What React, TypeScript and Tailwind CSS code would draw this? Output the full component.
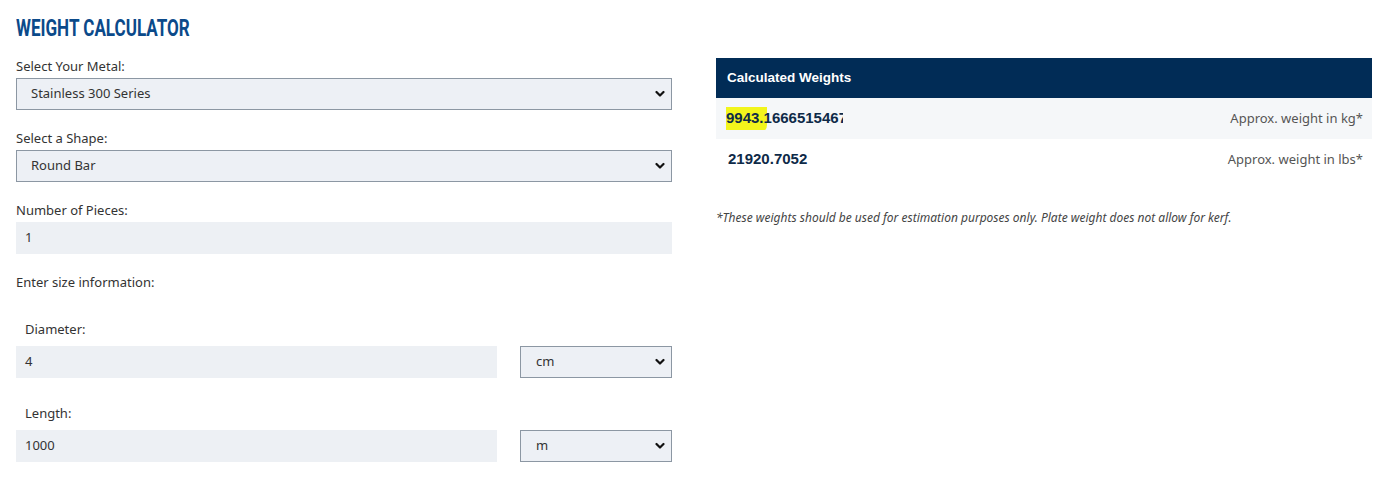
import React from "react";

const body = { fontFamily: '"Noto Sans", "Open Sans", sans-serif' };

function Chevron() {
  return (
    <svg width="10" height="7" viewBox="0 0 10 7" className="pointer-events-none absolute right-[6px] top-1/2 -translate-y-1/2">
      <path d="M1.5 1.5 L5 5 L8.5 1.5" fill="none" stroke="#111" strokeWidth="2.2" strokeLinecap="round" strokeLinejoin="round" />
    </svg>
  );
}

function Select({ value, pl = "pl-[14px]", className = "" }: { value: string; pl?: string; className?: string }) {
  return (
    <div className={`relative h-8 border border-[#8c97a3] bg-[#edf0f5] flex items-center ${pl} ${className}`}>
      <span className="text-[13px] text-[#333]">{value}</span>
      <Chevron />
    </div>
  );
}

function Input({ value, className = "" }: { value: string; className?: string }) {
  return (
    <div className={`h-8 bg-[#edf0f4] flex items-center pl-[9px] ${className}`}>
      <span className="text-[13px] text-[#333]">{value}</span>
    </div>
  );
}

function Label({ children, className = "" }: { children: React.ReactNode; className?: string }) {
  return <div className={`h-[18px] leading-[18px] text-[13px] text-[#333] ${className}`}>{children}</div>;
}

export default function App() {
  return (
    <div className="min-h-[488px] w-[1384px] bg-white pl-4 pr-3" style={body}>
      <div className="grid grid-cols-[656px_656px] gap-x-[44px]">
        <div>
          <div className="pt-[13px] h-[57px]">
            <h1
              className="origin-left scale-x-[0.71] whitespace-nowrap text-[24px] leading-[30px] font-bold text-[#0b4a8a]"
              style={{ fontFamily: 'Roboto, "Liberation Sans", sans-serif' }}
            >
              WEIGHT CALCULATOR
            </h1>
          </div>
          <Label>Select Your Metal:</Label>
          <Select value="Stainless 300 Series" className="mt-[3px]" />
          <Label className="mt-[19px]">Select a Shape:</Label>
          <Select value="Round Bar" className="mt-[3px]" />
          <Label className="mt-[19px]">Number of Pieces:</Label>
          <Input value="1" className="mt-[3px]" />
          <Label className="mt-[19px]">Enter size information:</Label>
          <Label className="mt-[29px] pl-[9px]">Diameter:</Label>
          <div className="mt-[8px] flex items-center gap-[23px]">
            <Input value="4" className="w-[481px]" />
            <Select value="cm" pl="pl-[15px]" className="w-[152px]" />
          </div>
          <Label className="mt-[26px] pl-[9px]">Length:</Label>
          <div className="mt-[8px] flex items-center gap-[23px]">
            <Input value="1000" className="w-[481px]" />
            <Select value="m" pl="pl-[15px]" className="w-[152px]" />
          </div>
        </div>

        <div className="pt-[58px]">
          <div
            className="h-10 bg-[#012c56] flex items-center pl-[11px] text-white text-[13.5px] font-bold"
            style={{ fontFamily: '"Liberation Sans", Arial, sans-serif' }}
          >
            Calculated Weights
          </div>
          <div className="h-[41px] bg-[#f5f7f9] flex items-center justify-between pl-[10px] pr-[9px]">
            <div
              className="w-[117px] overflow-hidden whitespace-nowrap text-[15px] font-bold text-[#0e2a48]"
              style={{ fontFamily: '"Liberation Sans", Arial, sans-serif' }}
            >
              <span className="bg-[#f2f51c] pt-[5px] pb-[7px] pl-[2px] pr-[3px] -ml-[2px] -mr-[3px] rounded-br-[8px]">9943.</span>
              1666515467
            </div>
            <span className="text-[13px] text-[#555]">Approx. weight in kg*</span>
          </div>
          <div className="h-[41px] bg-white flex items-center justify-between pl-[12px] pr-[9px]">
            <span
              className="text-[15px] font-bold text-[#0e2a48]"
              style={{ fontFamily: '"Liberation Sans", Arial, sans-serif' }}
            >
              21920.7052
            </span>
            <span className="text-[13px] text-[#555]">Approx. weight in lbs*</span>
          </div>
          <div className="mt-[30px] text-[12px] italic text-[#444] leading-[16px]">
            *These weights should be used for estimation purposes only. Plate weight does not allow for kerf.
          </div>
        </div>
      </div>
    </div>
  );
}
